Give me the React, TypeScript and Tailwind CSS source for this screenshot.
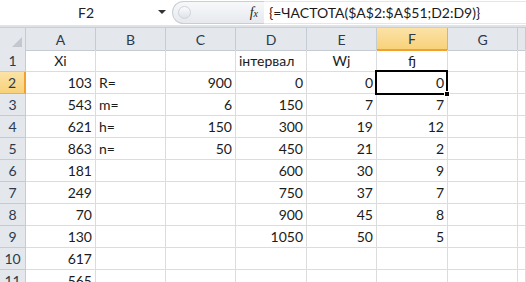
import React from 'react';

const cols = ['A', 'B', 'C', 'D', 'E', 'F', 'G', ''];

type Cell = { v: string; align?: 'l' | 'r' | 'c' };

const rows: Cell[][] = [
  [{ v: 'Xi', align: 'c' }, { v: '' }, { v: '' }, { v: 'інтервал', align: 'l' }, { v: 'Wj', align: 'c' }, { v: 'fj', align: 'c' }],
  [{ v: '103' }, { v: 'R=', align: 'l' }, { v: '900' }, { v: '0' }, { v: '0' }, { v: '0' }],
  [{ v: '543' }, { v: 'm=', align: 'l' }, { v: '6' }, { v: '150' }, { v: '7' }, { v: '7' }],
  [{ v: '621' }, { v: 'h=', align: 'l' }, { v: '150' }, { v: '300' }, { v: '19' }, { v: '12' }],
  [{ v: '863' }, { v: 'n=', align: 'l' }, { v: '50' }, { v: '450' }, { v: '21' }, { v: '2' }],
  [{ v: '181' }, { v: '' }, { v: '' }, { v: '600' }, { v: '30' }, { v: '9' }],
  [{ v: '249' }, { v: '' }, { v: '' }, { v: '750' }, { v: '37' }, { v: '7' }],
  [{ v: '70' }, { v: '' }, { v: '' }, { v: '900' }, { v: '45' }, { v: '8' }],
  [{ v: '130' }, { v: '' }, { v: '' }, { v: '1050' }, { v: '50' }, { v: '5' }],
  [{ v: '617' }],
  [{ v: '565' }],
];

const grid = 'grid grid-cols-[26px_70px_70px_70px_71px_70px_71px_70px_1fr]';

const App: React.FC = () => {
  return (
    <div
      className="w-[526px] h-[282px] overflow-hidden bg-white text-[14px] text-[#1b1b1b]"
      style={{ fontFamily: 'Lato, "Open Sans", sans-serif' }}
    >
      {/* formula bar */}
      <div className="flex h-[25px] items-center bg-white">
        <div className="relative flex h-full w-[172px] items-center justify-center">
          <span className="text-[14px] text-[#222]">F2</span>
          <span className="absolute right-[6px] top-[10px] h-0 w-0 border-x-[4px] border-t-[4px] border-x-transparent border-t-[#333]" />
        </div>
        <div className="flex h-[23px] w-[92px] items-center rounded-l-full border border-r-0 border-[#c9ced6] bg-gradient-to-b from-[#f7f8fa] to-[#e6e9ee]">
          <span className="ml-[5px] h-[13px] w-[13px] rounded-full border border-[#d0d4da] bg-gradient-to-b from-[#fafbfc] to-[#dfe3e8]" />
          <span className="ml-auto mr-[6px] font-serif text-[14px] italic text-[#222]" style={{ fontFamily: '"Liberation Serif", serif' }}>
            f<span className="text-[10px]">x</span>
          </span>
        </div>
        <div className="flex h-[23px] flex-1 items-center border-y border-[#e3e6ea] pl-[5px] text-[14px] text-[#1a1a1a]">
          {'{=ЧАСТОТА($A$2:$A$51;D2:D9)}'}
        </div>
      </div>
      <div className="h-[3px] border-b border-[#c9ced6] bg-[#dfe3e8]" />

      {/* column headers */}
      <div className={`${grid} h-[22px]`}>
        <div className="relative border-r border-b border-[#c5cbd3] bg-[#e4e7eb]">
          <span className="absolute bottom-[3px] right-[3px] h-0 w-0 border-l-[10px] border-t-[10px] border-l-transparent border-t-transparent border-b-0 border-r-0" style={{ borderBottom: '10px solid #c3c8cf', borderLeft: '10px solid transparent', borderTop: 0 }} />
        </div>
        {cols.map((c, i) =>
          c === 'F' ? (
            <div key={i} className="flex items-center justify-center border-r border-b-2 border-r-[#e0b45a] border-b-[#f2a12f] bg-gradient-to-b from-[#fbe2a6] to-[#f8d27a] text-[#2b3a4d]">
              {c}
            </div>
          ) : (
            <div key={i} className="flex items-center justify-center border-r border-b border-[#c5cbd3] bg-[#e4e7eb] text-[#2b3a4d]">
              {c}
            </div>
          )
        )}
      </div>

      {/* rows */}
      <div className="relative">
        {rows.map((r, ri) => (
          <div key={ri} className={`${grid} h-[22px]`}>
            {ri === 1 ? (
              <div className="flex items-center justify-center border-r-2 border-b border-r-[#f2a12f] border-b-[#e0b45a] bg-gradient-to-b from-[#fbe2a6] to-[#f8d27a] text-[#2b3a4d]">
                {ri + 1}
              </div>
            ) : (
              <div className="flex items-center justify-center border-r border-b border-[#c5cbd3] bg-[#e4e7eb] text-[#2b3a4d]">
                {ri + 1}
              </div>
            )}
            {cols.map((_, ci) => {
              const cell = r[ci];
              const align = cell?.align ?? 'r';
              const j = align === 'l' ? 'justify-start pl-[3px]' : align === 'c' ? 'justify-center' : 'justify-end pr-[3px]';
              return (
                <div key={ci} className={`flex items-center overflow-visible whitespace-nowrap border-r border-b border-[#dadcdd] ${j}`}>
                  {cell?.v ?? ''}
                </div>
              );
            })}
          </div>
        ))}
        {/* active cell F2 */}
        <div className="pointer-events-none absolute left-[375px] top-[20px] h-[25px] w-[73px] border-2 border-black">
          <span className="absolute -bottom-[4px] -right-[4px] h-[6px] w-[6px] border border-white bg-black" />
        </div>
      </div>
    </div>
  );
};

export default App;
